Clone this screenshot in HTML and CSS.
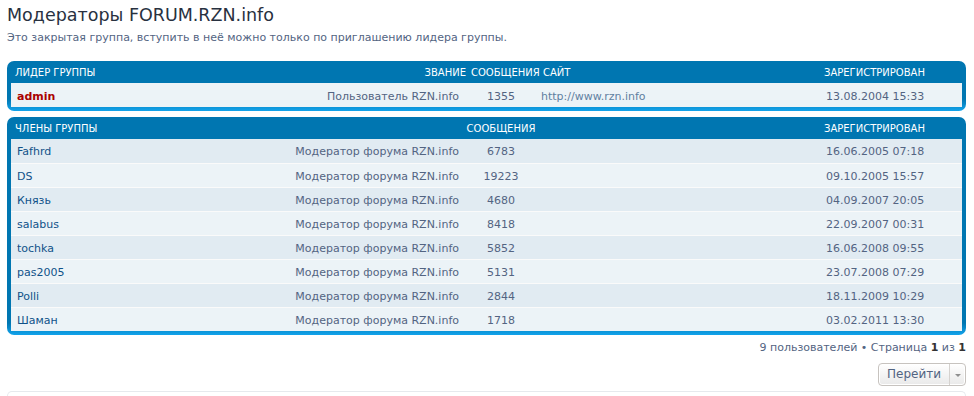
FILE: index.html
```html
<!DOCTYPE html>
<html>
	<head>
		<meta charset="utf-8">
		<title>Модераторы FORUM.RZN.info</title>
		<link rel="stylesheet" href="styles.css">
	</head>
	<body>
		<div id="wrap">
			<h2 class="group-title">Модераторы FORUM.RZN.info</h2>
			<p class="group-desc">Это закрытая группа, вступить в неё можно только по приглашению лидера группы.</p>

			<!-- лидер группы -->
			<div class="forumbg">
				<table class="table1 leader">
					<colgroup>
						<col class="c-name"><col class="c-rank"><col class="c-posts"><col class="c-site"><col class="c-date">
					</colgroup>
					<thead>
						<tr>
							<th class="name">Лидер группы</th>
							<th class="rank">Звание</th>
							<th class="posts">Сообщения</th>
							<th class="site">Сайт</th>
							<th class="joined">Зарегистрирован</th>
						</tr>
					</thead>
					<tbody>
						<tr class="bg1">
							<td class="name"><a href="#" class="leader-name">admin</a></td>
							<td class="rank">Пользователь RZN.info</td>
							<td class="posts">1355</td>
							<td class="site"><a href="#">http://www.rzn.info</a></td>
							<td class="joined">13.08.2004 15:33</td>
						</tr>
					</tbody>
				</table>
			</div>

			<!-- члены группы -->
			<div class="forumbg">
				<table class="table1 members">
					<colgroup>
						<col class="c-name"><col class="c-rank"><col class="c-posts"><col class="c-site"><col class="c-date">
					</colgroup>
					<thead>
						<tr>
							<th class="name">Члены группы</th>
							<th class="rank"></th>
							<th class="posts">Сообщения</th>
							<th class="site"></th>
							<th class="joined">Зарегистрирован</th>
						</tr>
					</thead>
					<tbody>
						<tr class="bg2"><td class="name"><a href="#">Fafhrd</a></td><td class="rank">Модератор форума RZN.info</td><td class="posts">6783</td><td class="site"></td><td class="joined">16.06.2005 07:18</td></tr>
						<tr class="bg1"><td class="name"><a href="#">DS</a></td><td class="rank">Модератор форума RZN.info</td><td class="posts">19223</td><td class="site"></td><td class="joined">09.10.2005 15:57</td></tr>
						<tr class="bg2"><td class="name"><a href="#">Князь</a></td><td class="rank">Модератор форума RZN.info</td><td class="posts">4680</td><td class="site"></td><td class="joined">04.09.2007 20:05</td></tr>
						<tr class="bg1"><td class="name"><a href="#">salabus</a></td><td class="rank">Модератор форума RZN.info</td><td class="posts">8418</td><td class="site"></td><td class="joined">22.09.2007 00:31</td></tr>
						<tr class="bg2"><td class="name"><a href="#">tochka</a></td><td class="rank">Модератор форума RZN.info</td><td class="posts">5852</td><td class="site"></td><td class="joined">16.06.2008 09:55</td></tr>
						<tr class="bg1"><td class="name"><a href="#">pas2005</a></td><td class="rank">Модератор форума RZN.info</td><td class="posts">5131</td><td class="site"></td><td class="joined">23.07.2008 07:29</td></tr>
						<tr class="bg2"><td class="name"><a href="#">Polli</a></td><td class="rank">Модератор форума RZN.info</td><td class="posts">2844</td><td class="site"></td><td class="joined">18.11.2009 10:29</td></tr>
						<tr class="bg1"><td class="name"><a href="#">Шаман</a></td><td class="rank">Модератор форума RZN.info</td><td class="posts">1718</td><td class="site"></td><td class="joined">03.02.2011 13:30</td></tr>
					</tbody>
				</table>
			</div>

			<div class="pagination">9 пользователей &bull; Страница <strong>1</strong> из <strong>1</strong></div>

			<div class="action-bar">
				<div class="jumpbox">
					<span class="jump-label">Перейти</span><span class="jump-caret"></span>
				</div>
			</div>

			<div class="panel-bottom"></div>
		</div>
	</body>
</html>
```

FILE: styles.css
```css
*{
	padding: 0;
	margin: 0;
	border: 0;
	box-sizing: border-box;
}
body{
	background-color: #ffffff;
	font-family: "DejaVu Sans", Verdana, sans-serif;
	font-size: 11px;
	color: #536482;
}
a{
	color: #105289;
	text-decoration: none;
}
#wrap{
	padding: 0 8px 0 7px;
}
.group-title{
	font-family: "DejaVu Sans", sans-serif;
	font-weight: normal;
	font-size: 17.5px;
	line-height: 22px;
	color: #28313f;
	margin-top: 4px;
}
.group-desc{
	font-size: 11px;
	line-height: 14px;
	margin-top: 5px;
	margin-bottom: 16px;
}
.forumbg{
	background: linear-gradient(to bottom, #0076b1 0, #0076b1 calc(100% - 12px), #12a3eb 100%);
	border-radius: 7px;
	padding: 0 4px 4px 4px;
	margin-bottom: 6px;
}
.table1{
	width: 100%;
	border-collapse: collapse;
	table-layout: fixed;
}
.c-name{ width: 279px; }
.c-rank{ width: 176px; }
.c-posts{ width: 70px; }
.c-site{ width: 285px; }
.c-date{ width: 141px; }

.table1 th{
	height: 22px;
	color: #ffffff;
	font-family: "DejaVu Sans", sans-serif;
	font-size: 10px;
	font-weight: normal;
	text-transform: uppercase;
	text-align: left;
	white-space: nowrap;
	padding: 0;
	vertical-align: middle;
}
.table1 th.name{ padding-left: 4px; }
.table1 th.rank{ text-align: right; padding-right: 0; }
.table1 th.posts{ text-align: center; }
.leader th.posts{ text-align: left; padding-left: 5px; }
.table1 th.site{ padding-left: 7px; }
.table1 th.joined{ padding-left: 3px; }

.table1 td{
	height: 24px;
	border-top: 1px solid #fafafa;
	white-space: nowrap;
	vertical-align: middle;
	padding: 2px 0 0 0;
}
.table1 tr.bg1 td{ background-color: #ecf3f7; }
.table1 tr.bg2 td{ background-color: #e1ebf2; }
.table1 tbody tr:first-child td{ border-top: 0; }

.table1 td.name{ padding-left: 6px; }
.table1 td.rank{ text-align: right; padding-right: 7px; }
.table1 td.posts{ text-align: center; }
.table1 td.site{ padding-left: 5px; }
.table1 td.site a{ color: #5f7fa0; }
.table1 td.joined{ padding-left: 5px; }

.leader-name{
	color: #aa0000;
	font-weight: bold;
}

.pagination{
	text-align: right;
	line-height: 14px;
	margin-top: 5px;
}
.pagination strong{
	color: #333333;
}
.action-bar{
	display: flex;
	justify-content: flex-end;
	margin-top: 8px;
}
.jumpbox{
	display: flex;
	height: 23px;
	border: 1px solid #c7c3bf;
	border-radius: 4px;
	background: linear-gradient(to bottom, #ffffff 0, #e9e9e9 100%);
	box-shadow: 0 0 0 1px #ffffff inset;
}
.jump-label{
	font-size: 12px;
	line-height: 21px;
	color: #536482;
	padding: 0 8px 0 8px;
	border-right: 1px solid #d5d2cf;
}
.jump-caret{
	width: 15px;
	display: flex;
	align-items: center;
	justify-content: center;
}
.jump-caret::after{
	content: "";
	border-top: 3px solid #8f8f8f;
	border-left: 3px solid transparent;
	border-right: 3px solid transparent;
	margin-top: 1px;
}
.panel-bottom{
	margin-top: 5px;
	height: 5px;
	border: 1px solid #e6e9ed;
	border-bottom: 0;
	border-radius: 7px 7px 0 0;
}
```
